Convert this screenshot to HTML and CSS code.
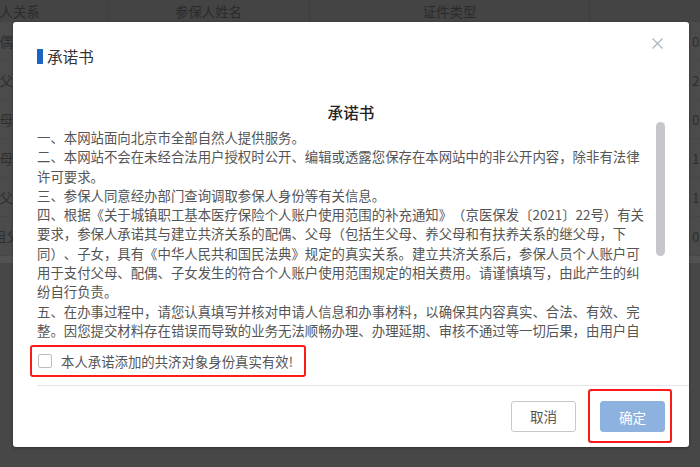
FILE: index.html
```html
<!DOCTYPE html>
<html lang="zh-CN">
<head>
<meta charset="utf-8">
<title>承诺书</title>
<link rel="stylesheet" href="styles.css">
</head>
<body>
<div class="page">
  <div class="table">
    <div class="tr thead">
      <div class="td c1">与参保人关系</div>
      <div class="td c2">参保人姓名</div>
      <div class="td c3">证件类型</div>
      <div class="td c4"></div>
    </div>
    <div class="tr"><div class="td c1">配偶</div><div class="td c2"></div><div class="td c3"></div><div class="td c4">0918</div></div>
    <div class="tr"><div class="td c1">岳父</div><div class="td c2"></div><div class="td c3"></div><div class="td c4">2210</div></div>
    <div class="tr"><div class="td c1">岳母</div><div class="td c2"></div><div class="td c3"></div><div class="td c4">0821</div></div>
    <div class="tr"><div class="td c1">祖母</div><div class="td c2"></div><div class="td c3"></div><div class="td c4">1003</div></div>
    <div class="tr"><div class="td c1">祖父</div><div class="td c2"></div><div class="td c3"></div><div class="td c4">1012</div></div>
    <div class="tr"><div class="td c1">外祖父</div><div class="td c2"></div><div class="td c3"></div><div class="td c4">0215</div></div>
    <div class="hbar"></div>
  </div>
</div>

<div class="modal">
  <div class="m-head">
    <span class="bar"></span>
    <span class="m-title">承诺书</span>
    <button class="close" type="button" aria-label="关闭">
      <svg width="11" height="11" viewBox="0 0 11 11"><path d="M0.5 0.5 L10.5 10.5 M10.5 0.5 L0.5 10.5" stroke="#aab5c4" stroke-width="1.2" fill="none"/></svg>
    </button>
  </div>
  <h2 class="doc-title">承诺书</h2>
  <div class="scroll-wrap">
    <div class="scroll">
      <p>一、本网站面向北京市全部自然人提供服务。</p>
      <p>二、本网站不会在未经合法用户授权时公开、编辑或透露您保存在本网站中的非公开内容，除非有法律许可要求。</p>
      <p>三、参保人同意经办部门查询调取参保人身份等有关信息。</p>
      <p>四、根据《关于城镇职工基本医疗保险个人账户使用范围的补充通知》（京医保发〔2021〕22号）有关要求，参保人承诺其与建立共济关系的配偶、父母（包括生父母、养父母和有扶养关系的继父母，下同）、子女，具有《中华人民共和国民法典》规定的真实关系。建立共济关系后，参保人员个人账户可用于支付父母、配偶、子女发生的符合个人账户使用范围规定的相关费用。请谨慎填写，由此产生的纠纷自行负责。</p>
      <p>五、在办事过程中，请您认真填写并核对申请人信息和办事材料，以确保其内容真实、合法、有效、完整。因您提交材料存在错误而导致的业务无法顺畅办理、办理延期、审核不通过等一切后果，由用户自行承担。</p>
    </div>
    <div class="sbar"><div class="thumb"></div></div>
  </div>
  <label class="agree hl">
    <span class="check"></span>
    <span class="agree-text">本人承诺添加的共济对象身份真实有效!</span>
  </label>
  <div class="divider"></div>
  <div class="m-foot">
    <button class="btn" type="button">取消</button>
    <div class="hl hl-btn">
      <button class="btn primary" type="button">确定</button>
    </div>
  </div>
</div>
</body>
</html>
```

FILE: styles.css
```css
* { box-sizing: border-box; }

html, body {
  margin: 0;
  padding: 0;
}

body {
  width: 700px;
  height: 467px;
  overflow: hidden;
  position: relative;
  background: #474747;
  font-family: "Noto Sans CJK SC", "Noto Sans", sans-serif;
  text-spacing-trim: space-all;
}

.page {
  width: 700px;
  overflow: hidden;
}

.table {
  margin-left: -108px;
  width: 1000px;
  background: #4b4b4b;
}

.tr {
  display: grid;
  grid-template-columns: 216px 202px 280px 302px;
  height: 39px;
  border-bottom: 1px solid #474747;
}

.thead {
  height: 22px;
  background: #444444;
  border-bottom: none;
}

.td {
  display: flex;
  align-items: center;
  justify-content: center;
  font-size: 13.4px;
  color: #2e2e2e;
  white-space: nowrap;
  overflow: hidden;
  border-right: 1px solid #434343;
}

.thead .td {
  color: #2b2b2b;
  border-right: 1px solid #3e3e3e;
}

.td.c4 {
  justify-content: flex-start;
  padding-left: 102px;
  border-right: none;
}

.hbar {
  height: 7px;
  background: #525252;
}

/* modal */
.modal {
  position: absolute;
  left: 13px;
  top: 22px;
  width: 676px;
  height: 425px;
  background: #ffffff;
  border-radius: 3px;
  box-shadow: 0 1px 3px rgba(0, 0, 0, 0.35);
  display: flex;
  flex-direction: column;
}

.m-head {
  display: flex;
  align-items: center;
  height: 44px;
  padding: 24px 26px 0 24px;
}

.bar {
  width: 6px;
  height: 15px;
  background: #1a64c4;
  margin-right: 4px;
}

.m-title {
  font-size: 15.6px;
  line-height: 20px;
  color: #333333;
}

.close {
  margin-left: auto;
  align-self: flex-start;
  margin-top: -8px;
  width: 11px;
  height: 11px;
  padding: 0;
  border: none;
  background: none;
  display: flex;
}

.doc-title {
  margin: 36px 0 0 0;
  text-align: center;
  font-size: 15.6px;
  line-height: 20px;
  font-weight: 500;
  color: #222222;
}

.scroll-wrap {
  margin-left: 24px;
  width: 628px;
  height: 219px;
  display: flex;
}

.scroll {
  flex: 1;
  overflow: hidden;
  padding: 6px 12px 0 0;
}

.scroll p {
  margin: 0;
  font-size: 13.4px;
  line-height: 19.3px;
  color: #555555;
}

.sbar {
  width: 9px;
  flex: none;
}

.thumb {
  height: 134px;
  background: #c5c7cb;
  border-radius: 5px;
}

.hl {
  border: 2px solid #ff1a1a;
  border-radius: 3px;
}

.agree {
  margin: 4px 0 0 17px;
  width: 276px;
  height: 32px;
  display: flex;
  align-items: center;
  padding-left: 6px;
}

.check {
  width: 14px;
  height: 14px;
  border: 1px solid #bdbdbd;
  border-radius: 2px;
  background: #ffffff;
  margin-right: 9px;
}

.agree-text {
  font-size: 13.4px;
  color: #555555;
}

.divider {
  margin: 8px 0 0 24px;
  border-top: 1px solid #e6e6e6;
}

.m-foot {
  display: flex;
  justify-content: flex-end;
  align-items: center;
  padding: 3px 17px 0 0;
  gap: 12px;
}

.hl-btn {
  padding: 10px 5px 9px 10px;
}

.btn {
  width: 65px;
  height: 31px;
  border: 1px solid #c9c9c9;
  border-radius: 3px;
  background: #ffffff;
  color: #555555;
  font-family: "Noto Sans CJK SC", "Noto Sans", sans-serif;
  font-size: 13.6px;
  padding: 0;
}

.btn.primary {
  background: #8db2e0;
  border-color: #8db2e0;
  color: #ffffff;
  display: block;
}
```
